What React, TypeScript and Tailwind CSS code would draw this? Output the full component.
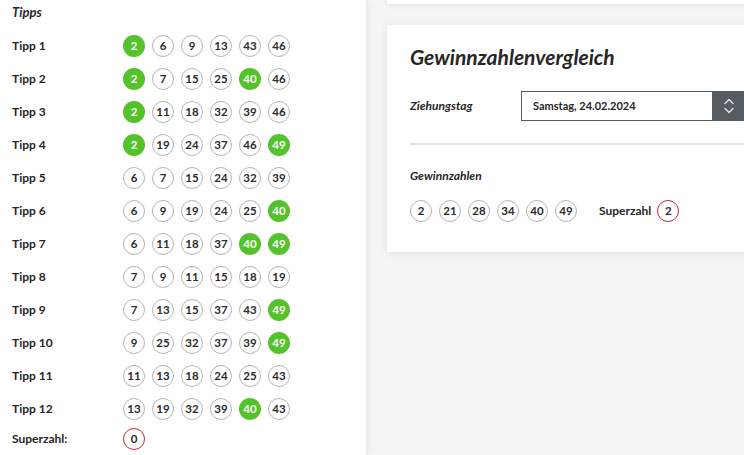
import React from 'react';

type Ball = { n: number; hit?: boolean };

const tipps: number[][] = [
    [2, 6, 9, 13, 43, 46],
    [2, 7, 15, 25, 40, 46],
    [2, 11, 18, 32, 39, 46],
    [2, 19, 24, 37, 46, 49],
    [6, 7, 15, 24, 32, 39],
    [6, 9, 19, 24, 25, 40],
    [6, 11, 18, 37, 40, 49],
    [7, 9, 11, 15, 18, 19],
    [7, 13, 15, 37, 43, 49],
    [9, 25, 32, 37, 39, 49],
    [11, 13, 18, 24, 25, 43],
    [13, 19, 32, 39, 40, 43],
];

const winning = [2, 21, 28, 34, 40, 49];
// only these count as hits in the left list (as in the screenshot)
const hits = [2, 40, 49];

const Circle: React.FC<{ ball: Ball; red?: boolean }> = ({ ball, red }) => {
    if (ball.hit) {
        return (
            <span className="w-[22px] h-[22px] rounded-full bg-[#53c22b] text-white flex items-center justify-center text-[11.5px] font-bold shrink-0">
                {ball.n}
            </span>
        );
    }
    return (
        <span
            className={`w-[22px] h-[22px] rounded-full border flex items-center justify-center text-[11.5px] font-bold text-[#2b2b2b] bg-white shrink-0 ${
                red ? 'border-[#c4283a]' : 'border-[#b5b5b5]'
            }`}
        >
            {ball.n}
        </span>
    );
};

const UpDown = () => (
    <svg width="12" height="18" viewBox="0 0 12 18" fill="none" stroke="#e6e8ea" strokeWidth="1.3" strokeLinecap="round" strokeLinejoin="round">
        <path d="M2 6.5 L6 2.5 L10 6.5" />
        <path d="M2 11.5 L6 15.5 L10 11.5" />
    </svg>
);

export default function App() {
    return (
        <div
            className="w-[744px] h-[455px] overflow-hidden bg-[#f5f5f5] flex text-[#262626]"
            style={{ fontFamily: 'Lato, "Open Sans", sans-serif' }}
        >
            {/* Tipps */}
            <div className="w-[366px] h-full bg-white shadow-[2px_0_8px_rgba(0,0,0,0.07)] pl-3 shrink-0 relative z-10">
                <div className="h-[29px] pt-[3px] text-[13px] font-bold italic">Tipps</div>
                {tipps.map((row, i) => (
                    <div key={i} className="h-[33px] flex items-center">
                        <span className="w-[111px] text-[12px] font-bold">Tipp {i + 1}</span>
                        <div className="flex gap-[7px]">
                            {row.map(n => (
                                <Circle key={n} ball={{ n, hit: hits.includes(n) }} />
                            ))}
                        </div>
                    </div>
                ))}
                <div className="h-[28px] flex items-center">
                    <span className="w-[111px] text-[12px] font-bold">Superzahl:</span>
                    <Circle ball={{ n: 0 }} red />
                </div>
            </div>

            {/* Right column */}
            <div className="flex-1 pl-[21px] mr-[-20px]">
                <div className="h-[24px] mt-[-20px] bg-white shadow-[0_1px_6px_rgba(0,0,0,0.08)]" />
                <div className="mt-[21px] bg-white shadow-[0_1px_8px_rgba(0,0,0,0.09)] pl-[23px] pr-[20px] pt-[18px] pb-[30px]">
                    <h2 className="text-[21px] leading-[28px] font-bold italic">Gewinnzahlenvergleich</h2>

                    <div className="mt-[20px] flex items-center">
                        <span className="w-[111px] text-[12px] font-bold italic">Ziehungstag</span>
                        <div className="flex-1 flex h-[30px]">
                            <div className="flex-1 border border-[#555c62] flex items-center pl-[11px] text-[11px] font-bold">
                                Samstag, 24.02.2024
                            </div>
                            <div className="w-[31px] bg-[#555c62] flex items-center justify-center">
                                <UpDown />
                            </div>
                        </div>
                    </div>

                    <div className="mt-[22px] h-[2px] bg-[#e2e2e2]" />

                    <div className="mt-[22px] text-[12px] font-bold italic">Gewinnzahlen</div>
                    <div className="mt-[15px] flex items-center">
                        <div className="flex gap-[7px]">
                            {winning.map(n => (
                                <Circle key={n} ball={{ n }} />
                            ))}
                        </div>
                        <span className="ml-[22px] text-[12px] font-bold">Superzahl</span>
                        <span className="ml-[6px]">
                            <Circle ball={{ n: 2 }} red />
                        </span>
                    </div>
                </div>
            </div>
        </div>
    );
}
